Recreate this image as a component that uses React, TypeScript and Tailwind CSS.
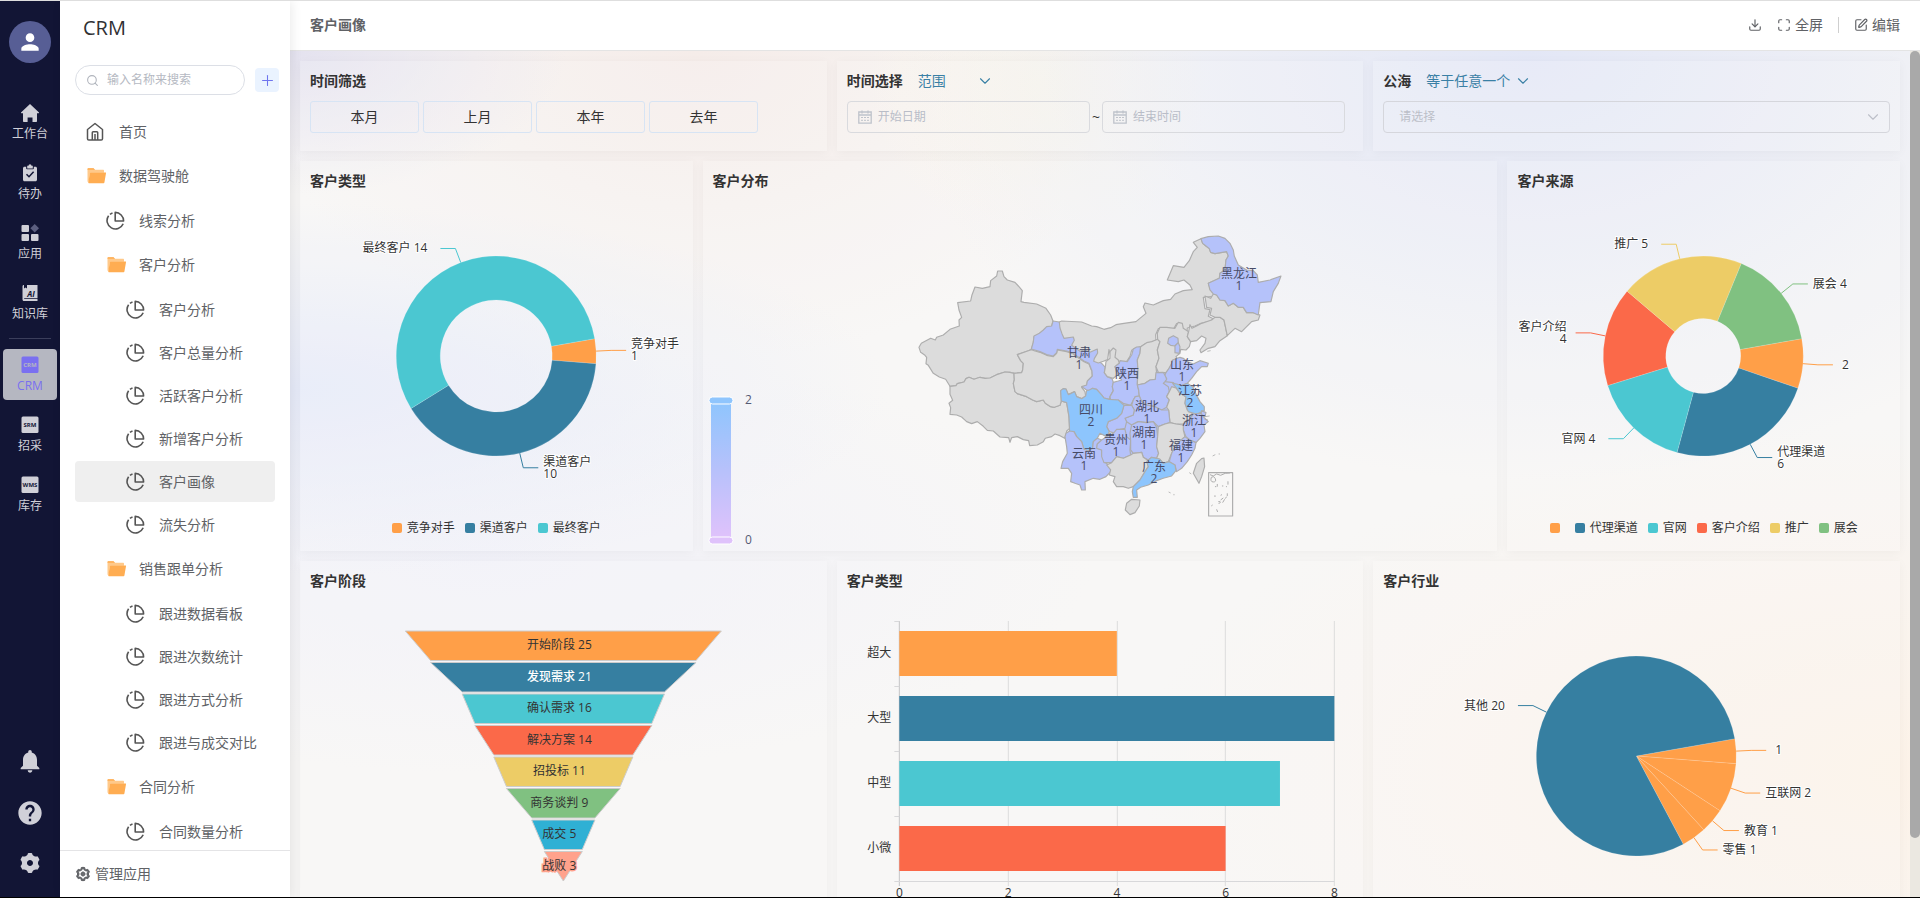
import type { ReactNode } from 'react'
import { ChevronDown, Download, Maximize, Plus, Search, SquarePen } from 'lucide-react'
import { MdHelp, MdNotifications, MdPerson } from 'react-icons/md'
import { RiSettings3Fill, RiSettings3Line } from 'react-icons/ri'

const ORANGE = '#ff9f48'
const BLUE   = '#367fa1'
const TEAL   = '#4bc7d1'
const RED    = '#fb6949'
const YELLOW = '#edcc66'
const GREEN  = '#80c181'

/* ---------- icons ---------- */

function HomeSolid() {
  return (
    <svg width="18" height="18" viewBox="0 0 18 18" fill="currentColor" aria-hidden="true">
      <path d="M9 0 18 8.6q.3.6-.4.6H16v8a.8.8 0 0 1-.8.8h-3.7v-4.6H6.6V18H2.8a.8.8 0 0 1-.8-.8v-8H.4q-.7 0-.4-.6z" />
    </svg>
  )
}

function TodoIcon() {
  return (
    <svg width="18" height="18" viewBox="0 0 18 18" fill="currentColor" aria-hidden="true">
      <path d="M3.5 2.8h1.7v1.7c0 .5.3.8.8.8h6c.5 0 .8-.3.8-.8V2.8h1.7c.8 0 1.5.7 1.5 1.5v11.4c0 .8-.7 1.5-1.5 1.5h-11c-.8 0-1.5-.7-1.5-1.5V4.3c0-.8.7-1.5 1.5-1.5z" />
      <path d="M6.2 1.8h1.3a1.5 1.5 0 0 1 3 0h1.3v2.7H6.2z" />
      <path d="m5.5 10.2 2.5 2.5 4.6-5" fill="none" stroke="#121535" strokeWidth="1.5" />
    </svg>
  )
}

function AppsIcon() {
  return (
    <svg width="18" height="18" viewBox="0 0 18 18" fill="currentColor" aria-hidden="true">
      <rect x="0.5" y="1" width="7.5" height="7" rx="1" />
      <rect x="0.5" y="10" width="7.5" height="7" rx="1" />
      <rect x="10" y="10" width="7.5" height="7" rx="1" />
      <path d="m13.7 0 4.3 4.3-4.3 4.3-4.3-4.3z" fill="#5c5f80" />
    </svg>
  )
}

function BookIcon() {
  return (
    <svg width="18" height="18" viewBox="0 0 18 18" fill="currentColor" aria-hidden="true">
      <path d="M1.5 2.5C1.5 1.5 2 1 3 1v3.5l1.5-1L6 4.5V1h10.500v13H3.500c-.5 0-.5.8 0 .8h13V17H3c-1 0-1.500-.6-1.500-1.500z" />
      <text x="10" y="12.5" fontSize="8" fontWeight="700" fontStyle="italic" textAnchor="middle" fill="#121535">AI</text>
    </svg>
  )
}

function TagIcon({ tag, active }: { tag: string; active?: boolean }) {
  return (
    <svg width="18" height="18" viewBox="0 0 18 18" aria-hidden="true">
      <rect x="0.5" y="0.5" width="17" height="16.5" rx="1.5" fill={active ? '#7a70f0' : '#d0d0d8'} />
      <text x="9" y="11" fontSize="6" fontWeight="700" textAnchor="middle" fill={active ? '#b5b6c0' : '#121535'}>
        {tag}
      </text>
    </svg>
  )
}

function HomeOutline() {
  return (
    <svg width="20" height="20" viewBox="0 0 20 20" fill="none" stroke="#555" strokeWidth="1.5" aria-hidden="true">
      <path d="M1.500 7.500 9 1.500l7.500 6v9.200c0 .8-.5 1.300-1.300 1.300H2.800c-.8 0-1.300-.5-1.300-1.300z" strokeLinejoin="round" />
      <path d="M6.300 18v-7.500c0-.5.3-.8.8-.8h3.800c.5 0 .8.300.8.8V18M9 12v6" />
    </svg>
  )
}

function PieIcon() {
  return (
    <svg width="20" height="20" viewBox="0 0 20 20" fill="none" stroke="#555" strokeWidth="1.6" aria-hidden="true">
      <path d="M2.600 4.700A8.400 8.400 0 1 0 17.200 12.800" />
      <path d="M4 3.300A8.400 8.400 0 0 1 6.500 1.900" />
      <path d="M9.200 1.400v8.600h8.400A8.500 8.500 0 0 0 9.200 1.400z" strokeLinejoin="round" />
    </svg>
  )
}

function FolderIcon() {
  return (
    <svg width="20" height="20" viewBox="0 0 20 20" aria-hidden="true">
      <path d="M1.500 3.200c0-.6.400-1 1-1h5l1.500 1.600h8c.6 0 1 .4 1 1v2H4L2.500 16.500l-1-1z" fill="#ffc98a" />
      <path d="M4.500 6.600h15c.5 0 .6.300.5.7l-1.600 9.200c-.1.500-.4.700-.8.700H2.900c-.5 0-.7-.3-.6-.7l1.500-9.300c.1-.4.300-.6.700-.6z" fill="#ffad52" />
      <path d="M1.500 3.200c0-.6.400-1 1-1h5l1.500 1.600H1.500z" fill="#ffad52" />
    </svg>
  )
}

function CalendarIcon() {
  return (
    <svg width="14" height="14" viewBox="0 0 14 14" fill="none" stroke="#bfc3cb" className="shrink-0" aria-hidden="true">
      <path d="M.8 2h12.400v11.200H.8zM.8 5h12.400M4 .5v3M10 .5v3" strokeWidth="1.300" />
      <path d="M3 7.500h8M3 10.300h8" strokeDasharray="2 1" />
    </svg>
  )
}

/* ---------- dark rail ---------- */

function RailItem({ label, active, children }: { label: string; active?: boolean; children: ReactNode }) {
  return (
    <a
      href="#"
      className={`flex h-[51px] w-[54px] flex-col items-center gap-1 rounded pt-[7px] text-xs leading-4 ${
        active ? 'bg-[#b5b7c1] text-[#7a70f0]' : 'text-[#d0d0d8]'
      }`}
    >
      {children}
      {label}
    </a>
  )
}

function Rail() {
  return (
    <aside className="flex w-[60px] shrink-0 flex-col items-center bg-[#121535] pt-5 text-[#d0d0d8]">
      <button aria-label="用户" className="flex size-[42px] items-center justify-center rounded-full bg-[#575e95] text-white">
        <MdPerson size={26} />
      </button>
      <nav className="mt-[34px] flex flex-col gap-[9px]">
        <RailItem label="工作台"><HomeSolid /></RailItem>
        <RailItem label="待办"><TodoIcon /></RailItem>
        <RailItem label="应用"><AppsIcon /></RailItem>
        <RailItem label="知识库"><BookIcon /></RailItem>
      </nav>
      <hr className="my-2.5 w-[42px] border-[#3b3e5b]" />
      <nav className="flex flex-col gap-[9px]">
        <RailItem label="CRM" active><TagIcon tag="CRM" active /></RailItem>
        <RailItem label="招采"><TagIcon tag="SRM" /></RailItem>
        <RailItem label="库存"><TagIcon tag="WMS" /></RailItem>
      </nav>
      <div className="mt-auto flex flex-col items-center gap-6 pb-[22px]">
        <button aria-label="通知"><MdNotifications size={28} /></button>
        <button aria-label="帮助"><MdHelp size={28} /></button>
        <button aria-label="设置"><RiSettings3Fill size={24} /></button>
      </div>
    </aside>
  )
}

/* ---------- menu ---------- */

type MenuEntry = { label: string; level: 1 | 2 | 3; kind: 'home' | 'folder' | 'page'; active?: boolean }

const menu: MenuEntry[] = [
  { label: '首页', level: 1, kind: 'home' },
  { label: '数据驾驶舱', level: 1, kind: 'folder' },
  { label: '线索分析', level: 2, kind: 'page' },
  { label: '客户分析', level: 2, kind: 'folder' },
  { label: '客户分析', level: 3, kind: 'page' },
  { label: '客户总量分析', level: 3, kind: 'page' },
  { label: '活跃客户分析', level: 3, kind: 'page' },
  { label: '新增客户分析', level: 3, kind: 'page' },
  { label: '客户画像', level: 3, kind: 'page', active: true },
  { label: '流失分析', level: 3, kind: 'page' },
  { label: '销售跟单分析', level: 2, kind: 'folder' },
  { label: '跟进数据看板', level: 3, kind: 'page' },
  { label: '跟进次数统计', level: 3, kind: 'page' },
  { label: '跟进方式分析', level: 3, kind: 'page' },
  { label: '跟进与成交对比', level: 3, kind: 'page' },
  { label: '合同分析', level: 2, kind: 'folder' },
  { label: '合同数量分析', level: 3, kind: 'page' },
]

const indent = { 1: 'pl-[11px]', 2: 'pl-[31px]', 3: 'pl-[51px]' }

function Sidebar() {
  return (
    <aside className="relative z-10 flex w-[230px] shrink-0 flex-col bg-white text-sm text-[#606266] shadow-[2px_0_10px_rgba(0,0,0,0.08)]">
      <h1 className="px-[23px] pt-[11px] text-xl leading-8 text-[#303133]">CRM</h1>
      <div className="mt-[21px] flex items-center gap-2.5 pl-[15px]">
        <label className="flex h-[30px] w-[170px] items-center gap-2 rounded-full border border-[#dcdfe6] px-2.5">
          <Search size={13} className="shrink-0 text-[#b0b4bc]" />
          <input
            aria-label="搜索"
            placeholder="输入名称来搜索"
            className="w-full min-w-0 bg-transparent text-xs outline-none placeholder:text-[#b5b9c2]"
          />
        </label>
        <button aria-label="新增" className="flex size-6 items-center justify-center rounded bg-[#eaf3ff] text-[#6f74ee]">
          <Plus size={17} strokeWidth={1.5} />
        </button>
      </div>
      <ul className="mt-[15px] min-h-0 flex-1 overflow-hidden px-[15px]">
        {menu.map((m, i) => (
          <li key={i} className={m.kind === 'folder' ? 'h-[46px]' : 'h-[43px] py-px'}>
            <a
              href="#"
              className={`flex h-full w-[200px] items-center gap-[13px] rounded ${indent[m.level]} ${
                m.active ? 'bg-[#efefef]' : ''
              }`}
            >
              {m.kind === 'home' && <HomeOutline />}
              {m.kind === 'folder' && <FolderIcon />}
              {m.kind === 'page' && <PieIcon />}
              {m.label}
            </a>
          </li>
        ))}
      </ul>
      <button className="flex h-[47px] shrink-0 items-center gap-1 border-t border-[#e4e4e6] px-[15px]">
        <RiSettings3Line size={16} stroke="currentColor" strokeWidth={1.5} />
        管理应用
      </button>
    </aside>
  )
}

/* ---------- charts ---------- */

type Slice = { name?: string; value: number; color: string; lines: string[]; gap?: number }

function polar(cx: number, cy: number, r: number, deg: number) {
  const a = (deg * Math.PI) / 180
  return [cx + r * Math.cos(a), cy - r * Math.sin(a)]
}

// Slices run clockwise from 10 degrees above the x axis
function PieChart({ title, width, slices, inner }: { title: string; width: number; slices: Slice[]; inner: number }) {
  const cx = width / 2
  const cy = 155
  const r  = 100
  const total = slices.reduce((s, d) => s + d.value, 0)
  let angle = 10

  return (
    <svg role="img" aria-label={title} viewBox={`0 0 ${width} 310`} className="h-[310px] w-full">
      {slices.map((s, i) => {
        const sweep = (s.value / total) * 360
        const from  = angle
        const to    = angle - sweep
        angle = to
        const mid = (from + to) / 2
        const big = sweep > 180 ? 1 : 0
        const [x1, y1] = polar(cx, cy, r, from)
        const [x2, y2] = polar(cx, cy, r, to)
        const [x3, y3] = polar(cx, cy, inner, to)
        const [x4, y4] = polar(cx, cy, inner, from)
        const [lx, ly] = polar(cx, cy, r, mid)
        const [ex, ey] = polar(cx, cy, r + 15, mid)
        const dir = ex > cx ? 1 : -1
        const tx  = ex + dir * (15 + (s.gap ?? 5))
        const ty  = s.lines.length > 1 ? ey - 2 : ey + 4
        return (
          <g key={i}>
            <path
              d={`M${x1} ${y1}A${r} ${r} 0 ${big} 1 ${x2} ${y2}L${x3} ${y3}A${inner} ${inner} 0 ${big} 0 ${x4} ${y4}Z`}
              fill={s.color}
              stroke="#fff"
              strokeOpacity={0.3}
              strokeWidth={0.5}
            />
            <path d={`M${lx} ${ly}L${ex} ${ey}h${dir * 15}`} fill="none" stroke={s.color} />
            <text
              fontSize="12"
              textAnchor={dir > 0 ? 'start' : 'end'}
              fill="#333"
              stroke="#fff"
              strokeWidth="2"
              paintOrder="stroke"
            >
              {s.lines.map((line, n) => (
                <tspan key={n} x={tx} y={ty + n * 12}>{line}</tspan>
              ))}
            </text>
          </g>
        )
      })}
    </svg>
  )
}

function Legend({ slices }: { slices: Slice[] }) {
  return (
    <ul className="flex h-[34px] items-center justify-center gap-2.5 text-xs text-[#333]">
      {slices.map((s, i) => (
        <li key={i} className="flex items-center gap-[5px]">
          <svg width="10" height="10" aria-hidden="true"><rect width="10" height="10" rx="2" fill={s.color} /></svg>
          <span>{s.name}</span>
        </li>
      ))}
    </ul>
  )
}

const typeSlices: Slice[] = [
  { name: '竞争对手', value: 1, color: ORANGE, lines: ['竞争对手', '1'] },
  { name: '渠道客户', value: 10, color: BLUE, lines: ['渠道客户', '10'] },
  { name: '最终客户', value: 14, color: TEAL, lines: ['最终客户 14'], gap: 13 },
]

const sourceSlices: Slice[] = [
  { name: '', value: 2, color: ORANGE, lines: ['2'], gap: 9 },
  { name: '代理渠道', value: 6, color: BLUE, lines: ['代理渠道', '6'] },
  { name: '官网', value: 4, color: TEAL, lines: ['官网 4'], gap: 13 },
  { name: '客户介绍', value: 4, color: RED, lines: ['客户介绍', '4'], gap: 9 },
  { name: '推广', value: 5, color: YELLOW, lines: ['推广 5'], gap: 13 },
  { name: '展会', value: 4, color: GREEN, lines: ['展会 4'] },
]

const industrySlices: Slice[] = [
  { value: 1, color: ORANGE, lines: ['1'], gap: 9 },
  { value: 2, color: ORANGE, lines: ['互联网 2'] },
  { value: 1, color: ORANGE, lines: ['教育 1'] },
  { value: 1, color: ORANGE, lines: ['零售 1'] },
  { value: 20, color: BLUE, lines: ['其他 20'], gap: 13 },
]

const stages = [
  { name: '开始阶段', value: 25, color: ORANGE },
  { name: '发现需求', value: 21, color: BLUE },
  { name: '确认需求', value: 16, color: TEAL },
  { name: '解决方案', value: 14, color: RED },
  { name: '招投标', value: 11, color: YELLOW },
  { name: '商务谈判', value: 9, color: GREEN },
  { name: '成交', value: 5, color: '#2fb0d4' },
  { name: '战败', value: 3, color: '#ffa28c' },
]

function FunnelChart() {
  const cx = 263
  const half = (v: number) => (v / 25) * 158
  return (
    <svg role="img" aria-label="客户阶段" viewBox="0 0 526 310" className="h-[310px] w-full">
      {stages.map((s, i) => {
        const top  = 30 + i * 31.5
        const next = half(stages[i + 1]?.value ?? 0)
        const w    = half(s.value)
        const last = i === stages.length - 1
        return (
          <g key={s.name}>
            <path
              d={`M${cx - w} ${top}H${cx + w}L${cx + next} ${top + 29.5}H${cx - next}Z`}
              fill={s.color}
              stroke="#ccc"
            />
            <text
              x={cx - 4}
              y={top + 18}
              fontSize="12"
              textAnchor="middle"
              fill={i === 1 ? '#fff' : '#333'}
              stroke={s.color}
              strokeWidth={last ? 3 : 0}
              paintOrder="stroke"
              fontWeight={i === 1 ? 500 : 400}
            >
              {s.name} {s.value}
            </text>
          </g>
        )
      })}
    </svg>
  )
}

const sizes = [
  { name: '超大', value: 4, color: ORANGE },
  { name: '大型', value: 8, color: BLUE },
  { name: '中型', value: 7, color: TEAL },
  { name: '小微', value: 6, color: RED },
]

function BarChart() {
  const x0   = 62
  const unit = 54.375
  return (
    <svg role="img" aria-label="客户类型" viewBox="0 0 526 310" className="h-[310px] w-full" fontSize="12" fill="#333">
      {[0, 2, 4, 6, 8].map((v) => (
        <g key={v}>
          <path d={`M${Math.round(x0 + v * unit)} 20v265`} stroke={v === 0 ? '#c4c4c6' : '#dcdcdd'} />
          <text x={x0 + v * unit} y="296" textAnchor="middle">{v}</text>
        </g>
      ))}
      <path d="M57 280.500H497M57 20.500h5M57 85.500h5M57 150.500h5M57 215.500h5" stroke="#d8d8da" />
      {sizes.map((s, i) => (
        <g key={s.name}>
          <rect x={x0} y={30 + i * 65} width={s.value * unit} height="45" fill={s.color} />
          <text x="54" y={56 + i * 65} textAnchor="end">{s.name}</text>
        </g>
      ))}
    </svg>
  )
}

/* ---------- china map, drawn on a 1200 x 930 grid ---------- */

const GRAY = '#dcdcdc'
const ONE  = '#b5c2fa'
const TWO  = '#8dc5fd'

const provinces = [
  { fill: GRAY, d: 'M150 499l-13-21-19-7-18-11-15-24-7-5 2-19-5-6-13-9-5-15 7-12 28-15 14 5 4-8 20-7 20-17 28-10-1-18 8-8-8-22-4-22 39-5 4-18 9-24 22 4 23-5 2-18 18-14 3-15h14l5 17 10 10 23 7 10 11 12 14-4 33 9 2 38 5 28 13 14 20 7 18-4 17-15 2-10 10-12 10-16 8-2 18-6 21-11 4-31 11 10 18 8 8-2 20-3 8-21 2-14-3-15-1-25 8-20 10-15 1-15-3-18 6-15-6-9 4-6 10-20 5-4 6z' },
  { fill: GRAY, d: 'M150 499l18-2 4-6 20-5 6-10 9-4 15 6 18-6 15 3 15-1 20-10 25-8 15 1 12 3 1 20-3 10 5 25 7 6 28 9 18 10 12 5 20-5 6 10 16 10 11 2 17-6 4-13 16 5 7 42 2 35-9 8-2 12-4 10-14-8-15-5-10 8-19 5-6 10-18 10-23 2-3-15-16-3-18-9-17 3-5 14-4-14-26-2-20-18-18-2-12-12-18-14-17 6-15-6-15-14-15-6-20-2 2-20-5-13 11-9-8-18z' },
  { fill: GRAY, d: 'M394 389l11 4 15 4 20 9 20 4 10-10 2-10 28 5 20 7 7 6 25 17 15 7 9 23 1 15-15 15-2 12-15 5 10 13 2 13-12 8-15-6-6-15-19 9-7-17-8-1-8 6 2 31-4 13-17 6-11-2-16-10-6-10-20 5-12-5-18-10-28-9-7-6-5-25 3-10-1-20 23-2 3-8 2-20-8-8-10-18 31-11z' },
  { fill: ONE, d: 'M459 303l19 3 7 14 6 17 6 14 28-4 3 10-8 15 25 18 15-5 15 8 22-10 1 12-10 17-2 8 19 10 11 12-3 16 9 12 14 6 4 11-3 13 3 12-10 18-2 8-16-4-6-8-16-18-12-3-10 7-8-2-15-10 15-5 2-12 15-15-1-15-9-23-15-7-25-17-7-6-20-7-28-5-2 10-10 10-20-4-20-9-26-8 6-21 2-18 16-8 12-10 10-10 15-2z' },
  { fill: GRAY, d: 'M478 306l7-3 60 3 30 12 15 2 22 8 20-5 16-9 24-4 36-5 30-25-8-20 5-11 25 6 30-13 22-4 13-16 25-10 27-3-7-14-18-15-17 5-33-5 18-43 32 5 16-20 12-27 12-13-12-15 23-11 5 14 10 8 10 8 4 11 13 4 35-6 5 13-7 12-3 30-15 10-2 15-33 15 7 20 13 12 5 6-40 4 5 34 15 3-5 20 15 7-10 8-30 7-15 7-23 6-1 15-16-10-3-15-12-3-10 18-25-3h-20l-8 18 1 18-18 7-15 3-18 12-12 1-10 6-5 18-13 20-22-3-10-10-10 0-8-27-4 30-13 5-15 5-14-5 2-8 10-17-1-12-22 10-15-8-15 5-25-18 8-15-3-10-28 4-6-14-6-17z' },
  { fill: GRAY, d: 'M616 442l2-17 12-10v-20l10-11 8 6-3 22 10 8 3 10-13 10 7 25-12 10-18-5-9-12z' },
  { fill: ONE, d: 'M722 380l-2 20-8 20 2 30-2 40 4 20 2 18-12 2-6 10-8 16-22-6-15-10-23 0-2-10 10-18-3-12 3-13 15-4 10-3-10-15-10-25 13-10 2-8 22 3 13-20 5-18 10-6z' },
  { fill: GRAY, d: 'M773 358l7 7-8 25 5 25-9 25 2 20-4 18-16 2-15 10-23 5 2-45-2-30 8-20 2-20 18-12 15-3z' },
  { fill: GRAY, d: 'M772 340l8-18h20l25 3 10-18 12 3 3 15 16 10-4 15 10 15-4 15-10 10-16-2-2 12-12 10 7 10-17 10-12 17-8 11-23-1-7-17 9-25-5-25 8-25-7-7z' },
  { fill: ONE, d: 'M820 347l14 8 1 13-10 10-13-2-9-6 3-15z' },
  { fill: ONE, d: 'M825 378l10-10 5 12-2 20-13-2z' },
  { fill: GRAY, d: 'M866 335l4-21 6 11 14-7 15-8 30-10 10-8h15l12 8 10 47-22 15-15 18-20 5-22 13-3-8 15-20 3-15-13-7-15 14-18 3-10-15z' },
  { fill: GRAY, d: 'M915 228l17 7 8-13 10 3 10 15 15 2 10 16 15-8 15 12h15l10 16 20 0 20 7-5 15-20 5-15 15-15 15-20-10-23 22-10-47-12-8h-15l-15-7 5-20-15-3z' },
  { fill: ONE, d: 'M903 56l22-6 30-2 20 7 15 15 10 20 3 18 12 27 25 15 20 2 12 13 3 22 35-7 33-12-8 22-15 25-7 30-33 3-5 37-15-7-20 0-10-16h-15l-15-12-15 8-10-16-15-2-10-15-10-3-10-12-5-20 33-15 2-15 15-10 3-30 7-12-5-13-35 6-13-4-4-11-10-8-10-8z' },
  { fill: ONE, d: 'M818 420l22-8 10 3 12 10 18 7 20-10 25 8-3 10h-17l-15 15-15 20-13 15-17 7-17-2-8-7-25-3 5-10-8-5 6-12 8-11 9-17z' },
  { fill: ONE, d: 'M768 458l22-1 7 13 3 8-5 7-5 5 15 10 3 15-8 15 8 10-8 22-15 8-20-10-25-5-15-10-7-17-2-18-4-15 23-5 15-10 16-2z' },
  { fill: GRAY, d: 'M815 500l15 5 10 15 18 10-3 20 7 20 18 12-12 18-18 12h-22l-18-4-4-38-6-8 8-22-8-10 8-15z' },
  { fill: TWO, d: 'M818 490l12 2 15 5 17-7 16 10 14 30 8 15 13 15v12l-23 11-25-8-10-25 3-20-18-10-10-15z' },
  { fill: ONE, d: 'M905 572l13 6-3 12-12-2z' },
  { fill: ONE, d: 'M880 582l23-2 9 12 13 13-13 10 3 20-15 20-12 13-18-8-12-10-8-20v-18l18-12z' },
  { fill: ONE, d: 'M718 528l7 17 15 10 25 5 20 10h21l4 38-15 4-20 8-15-15-20 3-25-3-20 10-15-10-5-10 25-10 3-15-8-14 5-16 6-10z' },
  { fill: ONE, d: 'M672 556h23l8 14-3 15-25 10 5 10-5 20-15 3-12 12-20-5-8-15 5-15 25-10 15-15z' },
  { fill: TWO, d: 'M482 512l8-6 8 1 7 17 19-9 6 15 15 6 12-8 3-16 8-2 10-5 12 3 16 18 6 8 16 4 27 2 17 16-7 24-15 15-25 10-5 15 8 15-8 15-20-10-8 15-12 10-2 20-13 8-13-5-7-23-15-15-8-15-13 5-2-50-7-42-16-5z' },
  { fill: ONE, d: 'M509 633l13 2 8 15 15 15 7 23 13 5 13-8 2-20 12-10 13 5-13 12-2 13 15 5 3 20 4 15 23 15-3 15-14 15-18 8-20-3-25 10 1 25h-11l-5-15-15-5-13-5 3-25-10-15h-22l5-20 14-25-2-20-5-30 3-10z' },
  { fill: ONE, d: 'M605 660l15-10 20-10 10-12h25l5 22 12 10-2 30 2 15-22 10-20-5-15 18h-23l-7-18v-20l-15-5 2-13z' },
  { fill: ONE, d: 'M695 615l20-10 25 3 20-3 10 17 3 28-3 30 6 20-6 15-15-3-10 8-15-8-5-15-25 3-8-10v-30l-2-20z' },
  { fill: GRAY, d: 'M775 620l20-8 15-4 18 4 22 3v15l5 20-17 15-13 15-10 20-10 25-15 5-10-12-10-3 6-15-6-20 3-30z' },
  { fill: ONE, d: 'M855 650l15 10 18 8-3 17-10 20-13 20-17 20-15 10-5-20-17-10 7-25 10-20 13-15z' },
  { fill: GRAY, d: 'M692 705l8-5 25-3 5 15 12 8 3 20-10 15-15 25-20 20-15 5-15-5h-20l-10-15 5-15-17-5 4-15-12-15 15-7 15-18 20 5z' },
  { fill: TWO, d: 'M770 715l10 3 10 12 18-5 17 10 3 17-13 16-25 7-20 7-25 13-23 7-12 8 2 22h-12l-3-17 3-15 20-20 15-25 10-15-5-15 15-13z' },
  { fill: GRAY, d: 'M680 850l15-12 25 2-2 18-13 20-15 6-14-14z' },
  { fill: GRAY, d: 'M912 714l2 26-9 30-8 20-17-30 10-30 15-14z' },
]

const mapLabels = [
  { name: '黑龙江', value: 1, x: 339, y: 58 },
  { name: '甘肃', value: 1, x: 179, y: 137 },
  { name: '陕西', value: 1, x: 227, y: 158 },
  { name: '山东', value: 1, x: 282, y: 149 },
  { name: '江苏', value: 2, x: 290, y: 175 },
  { name: '四川', value: 2, x: 191, y: 194 },
  { name: '湖北', value: 1, x: 247, y: 191 },
  { name: '浙江', value: 1, x: 294, y: 205 },
  { name: '湖南', value: 1, x: 244, y: 217 },
  { name: '贵州', value: 1, x: 216, y: 224 },
  { name: '福建', value: 1, x: 281, y: 230 },
  { name: '云南', value: 1, x: 184, y: 238 },
  { name: '广东', value: 2, x: 254, y: 251 },
]

function ChinaMap() {
  return (
    <svg role="img" aria-label="客户分布" viewBox="0 0 795 350" className="h-[350px] w-full">
      <defs>
        <linearGradient id="scale" x1="0" y1="0" x2="0" y2="1">
          <stop offset="0" stopColor="#8fc5fd" />
          <stop offset="0.5" stopColor="#b7c1fb" />
          <stop offset="1" stopColor="#dfc2fb" />
        </linearGradient>
      </defs>
      <rect x="8" y="202" width="20" height="134" fill="url(#scale)" />
      <rect x="6" y="196" width="24" height="7" rx="3.5" fill="#8fc5fd" stroke="#fff" />
      <rect x="6" y="336" width="24" height="7" rx="3.5" fill="#dfc2fb" stroke="#fff" />
      <g fontSize="12" fill="#555a74">
        <text x="42" y="203">2</text>
        <text x="42" y="343">0</text>
      </g>

      <g transform="translate(197 19)">
        <g transform="scale(0.3333)" stroke="#adadad" strokeWidth="3.5" strokeLinejoin="round">
          {/* backing, so that no seam shows between provinces */}
          <path d="M640 640l-30-110 90-80 120-60 30 120 30 80-40 60-60 60-80 20-40-20z" fill={ONE} stroke="none" />
          {provinces.map((p, i) => <path key={i} d={p.d} fill={p.fill} />)}
          <rect x="926" y="758" width="72" height="130" fill="none" />
          {/* south sea islands */}
          <path
            d="M930 764l10 4 10-6 12 4 14-6 14-1M934 772q8-6 12 4t-6 10-6-14M952 792v8M966 798h4M978 800h3M984 784v10M945 800h4M962 840l8-6M968 848l6-10M956 852l6-6M976 836l4-6M934 858l4-3M982 828v-8M950 868l3 8M945 826v5M962 826l4-2M955 845h6"
            fill="none"
            strokeWidth="3"
          />
          <path d="M915 590l14-2M914 598l10 2M938 708l8-4M956 702h4M868 758l6 4M806 816l6 3M822 822v4M932 392l-10 2" fill="none" strokeWidth="2.5" />
        </g>
        <g fontSize="12" fill="#474b66" textAnchor="middle">
          {mapLabels.map((l) => (
            <text key={l.name}>
              <tspan x={l.x} y={l.y}>{l.name}</tspan>
              <tspan x={l.x} y={l.y + 12}>{l.value}</tspan>
            </text>
          ))}
        </g>
      </g>
    </svg>
  )
}

/* ---------- page ---------- */

function Card({ title, extra, className, children }: { title: string; extra?: ReactNode; className: string; children: ReactNode }) {
  return (
    <section className={`min-w-0 bg-white/15 shadow-[0_2px_10px_rgba(0,0,0,0.04)] ${className}`}>
      <div className="flex h-10 items-center gap-[15px] px-2.5">
        <h2 className="text-sm font-bold text-[#333]">{title}</h2>
        {extra}
      </div>
      {children}
    </section>
  )
}

function InlineSelect({ label, value, className }: { label: string; value: string; className: string }) {
  return (
    <span className={`relative flex items-center text-sm text-[#3a80a5] ${className}`}>
      <select aria-label={label} className="w-full appearance-none bg-transparent outline-none">
        <option>{value}</option>
      </select>
      <ChevronDown size={18} strokeWidth={1.5} className="pointer-events-none absolute right-0" />
    </span>
  )
}

function DateBox({ placeholder }: { placeholder: string }) {
  return (
    <label className="flex h-8 min-w-0 flex-1 items-center gap-1.5 rounded border border-[#d9dade] px-2.5">
      <CalendarIcon />
      <input
        aria-label={placeholder}
        placeholder={placeholder}
        className="w-full min-w-0 bg-transparent text-xs outline-none placeholder:text-[#b9bdc8]"
      />
    </label>
  )
}

export default function App() {
  return (
    <div className="flex h-screen overflow-hidden border-t border-b border-t-[#dedede] border-b-black bg-white font-['Open_Sans','Noto_Sans_CJK_SC',sans-serif]">
      <Rail />
      <Sidebar />

      <div className="flex min-w-0 flex-1 flex-col">
        <header className="flex h-[50px] shrink-0 items-center border-b border-[#e4e4e4] px-5 pb-0.5 text-sm text-[#606266]">
          <h1 className="font-bold">客户画像</h1>
          <div className="ml-auto flex items-center gap-[15px]">
            <button aria-label="下载"><Download size={14} strokeWidth={2} /></button>
            <button className="flex items-center gap-1"><Maximize size={14} strokeWidth={2} />全屏</button>
            <span className="h-4 w-px bg-[#cfcfcf]" />
            <button className="flex items-center gap-1"><SquarePen size={14} strokeWidth={2} />编辑</button>
          </div>
        </header>

        <div className="flex min-h-0 flex-1 bg-[#f7f6f5] bg-[radial-gradient(ellipse_at_0%_0%,#e4e2ef,transparent_12%),radial-gradient(ellipse_at_0%_40%,#e6eaf8,transparent_26%),radial-gradient(ellipse_at_12%_60%,#f1f1f8,transparent_30%),radial-gradient(ellipse_at_76%_0%,#e3e7f6,transparent_36%),radial-gradient(ellipse_at_46%_4%,#faf5ea,transparent_14%),radial-gradient(ellipse_at_25%_0%,#f5ece9,transparent_26%),radial-gradient(ellipse_at_100%_85%,#fcf2e8,transparent_34%)]">
          <main className="min-w-0 flex-1 overflow-hidden p-2.5">
            <div className="grid grid-cols-12 gap-2.5">
              <Card title="时间筛选" className="col-span-4 h-[90px]">
                <div className="flex gap-1 px-2.5 text-sm text-[#333]">
                  {['本月', '上月', '本年', '去年'].map((t) => (
                    <button key={t} className="h-8 w-[109px] rounded-[3px] border border-[#d7e4f4]">{t}</button>
                  ))}
                </div>
              </Card>
              <Card
                title="时间选择"
                className="col-span-4 h-[90px]"
                extra={<InlineSelect label="时间选择" value="范围" className="w-[76px]" />}
              >
                <div className="flex items-center gap-0.5 pr-[18px] pl-2.5 text-sm text-[#333]">
                  <DateBox placeholder="开始日期" />
                  <span>~</span>
                  <DateBox placeholder="结束时间" />
                </div>
              </Card>
              <Card
                title="公海"
                className="col-span-4 h-[90px]"
                extra={<InlineSelect label="公海条件" value="等于任意一个" className="w-[106px]" />}
              >
                <div className="relative mx-2.5 flex items-center">
                  <select
                    aria-label="公海"
                    className="h-8 w-full appearance-none rounded border border-[#d5d6dc] bg-transparent px-[15px] text-xs text-[#bcbfc8] outline-none"
                  >
                    <option>请选择</option>
                  </select>
                  <ChevronDown size={18} strokeWidth={1.5} className="pointer-events-none absolute right-2 text-[#bcbfc8]" />
                </div>
              </Card>

              <Card title="客户类型" className="col-span-3 h-[390px]">
                <PieChart title="客户类型" width={392} slices={typeSlices} inner={56} />
                <Legend slices={typeSlices} />
              </Card>
              <Card title="客户分布" className="col-span-6 h-[390px]">
                <ChinaMap />
              </Card>
              <Card title="客户来源" className="col-span-3 h-[390px]">
                <PieChart title="客户来源" width={392} slices={sourceSlices} inner={37.5} />
                <Legend slices={sourceSlices} />
              </Card>

              <Card title="客户阶段" className="col-span-4 h-[390px]"><FunnelChart /></Card>
              <Card title="客户类型" className="col-span-4 h-[390px]"><BarChart /></Card>
              <Card title="客户行业" className="col-span-4 h-[390px]">
                <PieChart title="客户行业" width={526} slices={industrySlices} inner={0} />
              </Card>
            </div>
          </main>
          <div className="w-2.5 shrink-0 bg-[#ebe8e1]">
            <div className="h-[93%] rounded-full bg-[#a9a9a9]" />
          </div>
        </div>
      </div>
    </div>
  )
}
